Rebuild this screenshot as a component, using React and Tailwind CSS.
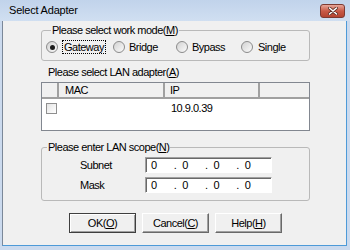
import React from 'react';

function Mn({ children }) {
  return <span className="underline underline-offset-[1px]">{children}</span>;
}

function Radio({ checked }) {
  return (
    <span className="w-[12px] h-[12px] shrink-0 rounded-full border border-[#8b8b8b] bg-linear-to-br from-[#d2d2d2] to-[#fbfbfb] flex items-center justify-center">
      {checked && <span className="w-[5px] h-[5px] rounded-full bg-[#1c1c1c]" />}
    </span>
  );
}

function IpField({ values }) {
  return (
    <div className="w-[127px] h-[16px] flex bg-white border border-t-[#a0a0a0] border-l-[#a0a0a0] border-r-white border-b-white shadow-[inset_1px_1px_0_#696969]">
      {values.map((v, i) => (
        <div key={i} className="flex-1 flex items-center justify-between pl-[5px] pr-[1px]">
          <span>{v}</span>
          {i < 3 && <span>.</span>}
        </div>
      ))}
    </div>
  );
}

function Button({ children, isDefault }) {
  return (
    <div
      className={
        'w-[67px] h-[20px] flex items-center justify-center bg-[#f0f0f0] border ' +
        (isDefault
          ? 'border-[#3f3f3f] shadow-[inset_1px_1px_0_#ffffff,inset_-1px_-1px_0_#a0a0a0]'
          : 'border-t-white border-l-white border-r-[#696969] border-b-[#696969] shadow-[inset_-1px_-1px_0_#a0a0a0]')
      }
    >
      {children}
    </div>
  );
}

export default function App() {
  return (
    <div className="w-[350px] h-[250px] bg-[#cbdaee] flex flex-col font-['Liberation_Sans',Arial,sans-serif] text-black overflow-hidden">
      {/* Title bar */}
      <div className="h-[21px] shrink-0 flex items-center justify-between pl-[9px] pr-[5px] bg-linear-to-b from-[#c1d3eb] to-[#d0dff1]">
        <span className="text-[11px] tracking-[-0.2px]">Select Adapter</span>
        <div className="w-[25px] h-[14px] rounded-[3px] border border-[#7d3a32] bg-linear-to-b from-[#e6a69a] via-[#c95a47] to-[#b44431] flex items-center justify-center">
          <svg width="10" height="8" viewBox="0 0 10 8">
            <path d="M1.5 1 L8.5 7 M8.5 1 L1.5 7" stroke="#5a2a22" strokeWidth="3" strokeLinecap="round" />
            <path d="M1.5 1 L8.5 7 M8.5 1 L1.5 7" stroke="#ffffff" strokeWidth="1.6" strokeLinecap="round" />
          </svg>
        </div>
      </div>

      {/* Client area */}
      <div className="flex-1 ml-[2px] mr-[3px] mb-[4px] bg-[#f0f0f0] border-l border-l-[#7b8899] border-r border-r-[#4d9ad8] border-b border-b-[#4d9ad8] text-[11px] tracking-[-0.5px] leading-[12px] pl-[38px] pt-[3px]">
        <div className="w-[269px] flex flex-col">
          {/* Work mode */}
          <fieldset className="border border-[#b9b9b9] rounded-[3px] pt-[4px] pb-[6px] pl-[4px]">
            <legend className="ml-[5px] px-[1px]">
              Please select work mode(<Mn>M</Mn>)
            </legend>
            <div className="h-[14px] flex items-center">
              <div className="w-[67px] flex items-center gap-[4px]">
                <Radio checked />
                <span className="border border-dotted border-black px-[1px] leading-[12px]">Gateway</span>
              </div>
              <div className="w-[63px] flex items-center gap-[4px]">
                <Radio />
                <span>Bridge</span>
              </div>
              <div className="w-[65px] flex items-center gap-[4px]">
                <Radio />
                <span>Bypass</span>
              </div>
              <div className="flex items-center gap-[5px]">
                <Radio />
                <span>Single</span>
              </div>
            </div>
          </fieldset>

          <div className="mt-[5px] pl-[7px]">
            Please select LAN adapter(<Mn>A</Mn>)
          </div>

          {/* List view */}
          <div className="mt-[4px] h-[49px] border border-[#828790] bg-white flex flex-col">
            <div className="h-[16px] shrink-0 flex bg-[#f0f0f0] border-b-2 border-b-[#a0a0a0]">
              <div className="w-[17px] border-r-2 border-r-[#a0a0a0]" />
              <div className="w-[106px] border-r-2 border-r-[#a0a0a0] pl-[6px] flex items-center">MAC</div>
              <div className="w-[95px] border-r-2 border-r-[#a0a0a0] pl-[5px] flex items-center">IP</div>
              <div className="flex-1" />
            </div>
            <div className="flex items-center h-[12px] mt-[3px]">
              <div className="w-[17px] pl-[4px] flex items-center">
                <span className="w-[11px] h-[11px] border border-[#8f8f8f] bg-linear-to-br from-[#e4e4e4] to-white" />
              </div>
              <div className="w-[106px]" />
              <div className="pl-[6px]">10.9.0.39</div>
            </div>
          </div>

          {/* LAN scope */}
          <fieldset className="mt-[10px] border border-[#b9b9b9] rounded-[3px] pt-[4px] pb-[7px]">
            <legend className="ml-[5px] px-[1px]">
              Please enter LAN scope(<Mn>N</Mn>)
            </legend>
            <div className="flex flex-col gap-[4px]">
              <div className="flex items-center">
                <div className="w-[103px] pl-[38px]">Subnet</div>
                <IpField values={['0', '0', '0', '0']} />
              </div>
              <div className="flex items-center">
                <div className="w-[103px] pl-[38px]">Mask</div>
                <IpField values={['0', '0', '0', '0']} />
              </div>
            </div>
          </fieldset>

          {/* Buttons */}
          <div className="mt-[12px] ml-[28px] flex gap-[6px]">
            <Button isDefault>
              OK(<Mn>O</Mn>)
            </Button>
            <Button>
              Cancel(<Mn>C</Mn>)
            </Button>
            <Button>
              Help(<Mn>H</Mn>)
            </Button>
          </div>
        </div>
      </div>
    </div>
  );
}
